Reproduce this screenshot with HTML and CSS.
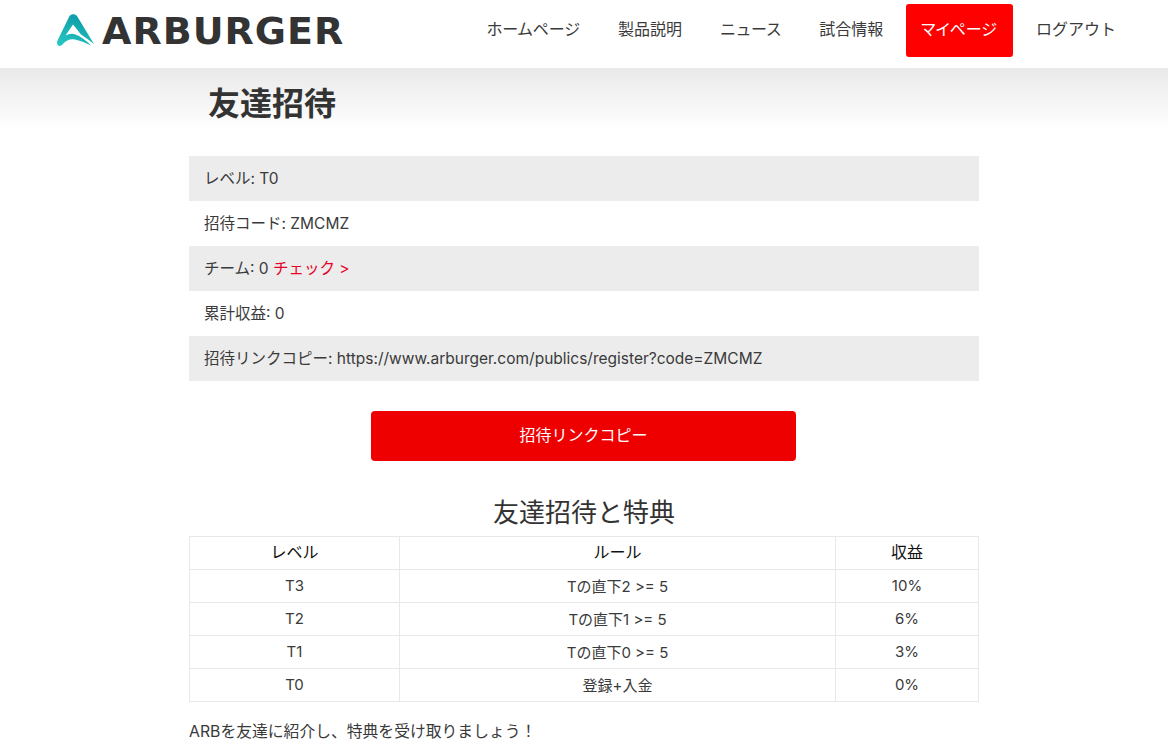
FILE: index.html
```html
<!DOCTYPE html>
<html lang="ja">
<head>
    <meta charset="UTF-8">
    <meta name="viewport" content="width=device-width, initial-scale=1.0">
    <title>友達招待</title>
    <link rel="stylesheet" href="styles.css">
</head>
<body>
    <header class="site-header">
        <a class="logo" href="#">
            <svg class="logo-mark" viewBox="0 0 38 33" width="38" height="33">
                <defs>
                    <linearGradient id="logoGrad" x1="0.2" y1="1" x2="0.7" y2="0">
                        <stop offset="0" stop-color="#27c6c2"/>
                        <stop offset="1" stop-color="#0b98a6"/>
                    </linearGradient>
                </defs>
                <path d="M12.500 2C14.500-0.500 18-0.500 20 2L37 30Q30 24.500 24 20.500L16 10.500 8.500 21.500Q13 19 17 20Q26 23 34 31.500Q25 27 18 25.500Q10 24.500 5 31Q1 33.500 0 29.500Q0 27.500 1 25.500Z" fill="url(#logoGrad)"/>
            </svg>
            <span class="logo-text">ARBURGER</span>
        </a>
        <nav class="main-nav">
            <a href="#">ホームページ</a>
            <a href="#">製品説明</a>
            <a href="#" class="news">ニュース</a>
            <a href="#">試合情報</a>
            <a href="#" class="active">マイページ</a>
            <a href="#" class="logout">ログアウト</a>
        </nav>
    </header>

    <main class="page">
        <h1 class="page-title">友達招待</h1>
        <div class="content">
            <ul class="info-list">
                <li>レベル: T0</li>
                <li>招待コード: ZMCMZ</li>
                <li>チーム: 0 <a href="#" class="check-link">チェック &gt;</a></li>
                <li>累計収益: 0</li>
                <li>招待リンクコピー: https://www.arburger.com/publics/register?code=ZMCMZ</li>
            </ul>
            <button class="copy-btn">招待リンクコピー</button>
            <h2 class="section-title">友達招待と特典</h2>
            <table class="reward-table">
                <thead>
                    <tr><th class="col-level">レベル</th><th class="col-rule">ルール</th><th>収益</th></tr>
                </thead>
                <tbody>
                    <tr><td>T3</td><td>Tの直下2 &gt;= 5</td><td>10%</td></tr>
                    <tr><td>T2</td><td>Tの直下1 &gt;= 5</td><td>6%</td></tr>
                    <tr><td>T1</td><td>Tの直下0 &gt;= 5</td><td>3%</td></tr>
                    <tr><td>T0</td><td>登録+入金</td><td>0%</td></tr>
                </tbody>
            </table>
            <p class="note">ARBを友達に紹介し、特典を受け取りましょう！</p>
        </div>
    </main>
</body>
</html>
```

FILE: styles.css
```css
* {
    box-sizing: border-box;
}
html, body {
    height: 746px;
    overflow: hidden;
}
body {
    margin: 0;
    font-family: Inter, "Noto Sans CJK JP", sans-serif;
    font-size: 15.5px;
    color: #3a3a3a;
    background: #fff;
}
a {
    text-decoration: none;
    color: inherit;
}
.site-header {
    height: 68px;
    display: flex;
    justify-content: space-between;
    align-items: flex-start;
    padding: 0 37px 0 57px;
    background: #fff;
}
.logo {
    display: flex;
    align-items: center;
    gap: 7px;
    height: 61px;
}
.logo-text {
    font-family: "DejaVu Sans", sans-serif;
    font-weight: 700;
    font-size: 38px;
    letter-spacing: 1px;
    color: #333;
}
.main-nav {
    display: flex;
    padding-top: 4px;
    gap: 6px;
}
.main-nav a {
    height: 53px;
    line-height: 51px;
    padding: 0 16px;
    font-size: 16px;
    color: #3a3a3a;
    border-radius: 3px;
    font-feature-settings: "palt";
}
.main-nav a.news {
    font-feature-settings: normal;
    letter-spacing: -0.5px;
}
.main-nav a.logout {
    padding: 0 15px 0 17px;
    font-feature-settings: normal;
}
.main-nav a.active {
    padding: 0 16px 0 15px;
    margin-left: 1px;
    background: #f00;
    color: #fff;
}
.page {
    background: linear-gradient(#e9e9e9, #fff 62px);
    height: 678px;
}
.page-title {
    width: 790px;
    margin: 0 auto;
    padding: 14px 0 0 19px;
    height: 88px;
    font-size: 32px;
    line-height: 44px;
    font-weight: 700;
    color: #333;
}
.content {
    width: 790px;
    margin: 0 auto;
}
.info-list {
    list-style: none;
    margin: 0;
    padding: 0;
}
.info-list li {
    height: 45px;
    line-height: 45px;
    padding-left: 15px;
}
.info-list li:nth-child(odd) {
    background: #ececec;
}
.check-link {
    color: #e60026;
}
.copy-btn {
    display: block;
    width: 425px;
    height: 50px;
    margin: 30px 0 0 182px;
    padding: 0 0 4px;
    border: none;
    border-radius: 4px;
    background: #ef0000;
    color: #fff;
    font: inherit;
    font-size: 16px;
    cursor: pointer;
}
.section-title {
    margin: 33px 0 0;
    height: 42px;
    line-height: 38px;
    text-align: center;
    font-size: 26px;
    font-weight: 400;
    color: #333;
}
.reward-table {
    width: 100%;
    border-collapse: collapse;
    table-layout: fixed;
    font-size: 15px;
}
.reward-table th,
.reward-table td {
    height: 33px;
    padding: 0 0 2px;
    border: 1px solid #e8e8e8;
    text-align: center;
    font-weight: 400;
}
.reward-table th {
    padding-bottom: 4px;
    color: #111;
    font-size: 16px;
}
.col-level {
    width: 210px;
}
.col-rule {
    width: 436px;
}
.note {
    margin: 18px 0 0;
    line-height: 24px;
    font-size: 15.8px;
}
```
